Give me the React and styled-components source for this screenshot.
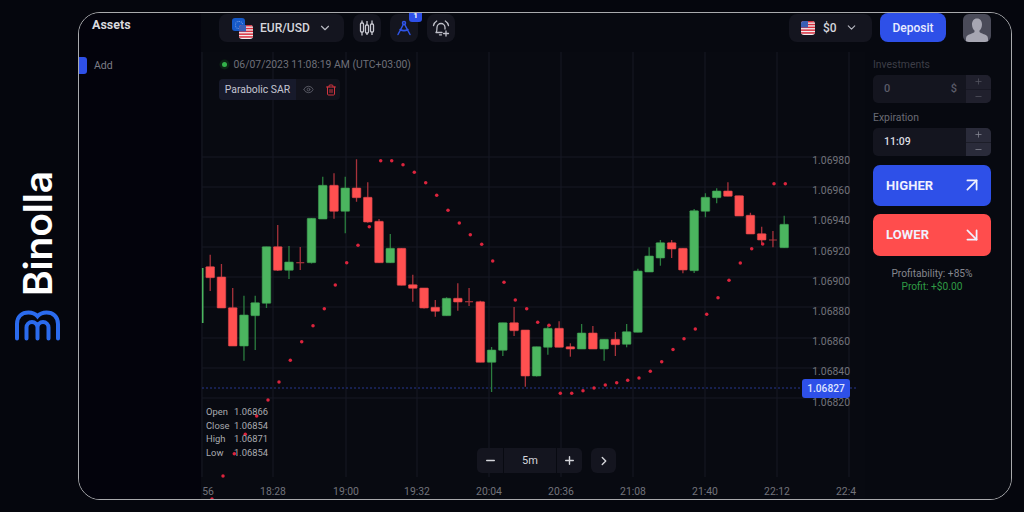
import React from "react";
import styled, { createGlobalStyle } from "styled-components";
import { ChevronDown, ChevronRight, Eye, Trash2, Plus, Minus, ArrowUpRight, ArrowDownRight } from "lucide-react";

const Global = createGlobalStyle`
  html, body { margin: 0; padding: 0; background: #05060d; }
  body { font-family: Roboto, "Liberation Sans", sans-serif; }
  * { box-sizing: border-box; }
`;

const Page = styled.div`
  width: 1024px; height: 512px; display: flex; overflow: hidden; background: #05060d;
  padding: 12px 12px 12px 0;
`;
const LogoRail = styled.div`
  width: 78px; flex: none; display: flex; flex-direction: column; align-items: center; justify-content: flex-start;
  padding: 159px 3px 0 0; gap: 14px;
`;
const LogoWord = styled.div`
  writing-mode: vertical-rl; transform: rotate(180deg); font-family: Inter, sans-serif; font-weight: 600;
  font-size: 39px; line-height: 40px; color: #fff; letter-spacing: -0.2px;
`;
const Frame = styled.div`
  flex: 1; display: flex; border: 1.5px solid #a9aaad; border-radius: 22px; overflow: hidden; background: #080a11;
`;
const Sidebar = styled.aside`
  width: 122px; flex: none; background: #03030c; display: flex; flex-direction: column; padding-top: 4px;
`;
const SideTitle = styled.div`
  font-size: 12.5px; font-weight: 700; color: #d9d9de; padding-left: 13px; line-height: 16px;
`;
const SideItem = styled.div`
  display: flex; align-items: center; gap: 7px; margin-top: 24px; font-size: 10.5px; color: #7c7d87;
`;
const SideMark = styled.span`
  width: 8px; height: 17px; background: #2e50e8; border-radius: 0 3px 3px 0;
`;
const Main = styled.div`
  flex: 1; display: flex; flex-direction: column; min-width: 0;
`;
const Header = styled.header`
  height: 39px; flex: none; display: flex; align-items: flex-start; padding: 0.5px 20px 0 18px; gap: 9px; background: #070910;
`;
const Pill = styled.div`
  height: 28px; background: #14151f; border-radius: 8px; display: flex; align-items: center; color: #d5d6dc;
  font-size: 12px; font-weight: 500; width: ${p => p.$w}px; padding-left: ${p => p.$pl}px; gap: ${p => p.$gap}px;
  svg { flex: none; }
`;
const FlagPair = styled.span`
  position: relative; width: 20px; height: 21px; display: block; margin-top: 1px;
`;
const BlueSquare = styled.span`
  position: absolute; left: 0; top: 0; width: 13px; height: 13px; border-radius: 3px; background: #1559c8;
  &::after {
    content: ""; position: absolute; left: 3px; top: 3px; width: 6px; height: 6px; border-radius: 50%;
    border: 1px dotted #7fa4e6;
  }
`;
const FlagOver = styled.span`
  position: absolute; left: 7px; top: 7px; display: block; line-height: 0;
`;
const IconBtn = styled.div`
  position: relative; width: 28px; height: 28px; background: #14151f; border-radius: 8px;
  display: flex; align-items: center; justify-content: center;
`;
const Badge = styled.span`
  position: absolute; top: -3px; right: -4px; width: 13px; height: 11px; background: #2e50e8; border-radius: 0 0 3px 3px;
  color: #fff; font-size: 8px; font-weight: 700; line-height: 10px; text-align: center;
`;
const Spacer = styled.div` flex: 1; `;
const Deposit = styled.div`
  width: 66px; height: 29px; margin: -0.5px 8px 0 -1px; background: #2e50e8; border-radius: 8px; color: #e9ecff; font-size: 12px; font-weight: 500;
  display: flex; align-items: center; justify-content: center;
`;
const Avatar = styled.div`
  width: 28px; height: 28px; background: #4a4b59; border-radius: 6px; overflow: hidden; line-height: 0;
`;
const Workspace = styled.div`
  flex: 1; display: flex; min-height: 0;
`;
const ChartArea = styled.div`
  position: relative; width: 664px; flex: none; overflow: hidden;
`;
const ChartSvg = styled.svg`
  display: block; width: 664px; height: 447px;
`;
const Stamp = styled.div`
  position: absolute; left: 20.5px; top: 5.5px; display: flex; align-items: center; gap: 7px; font-size: 10.4px; color: #6f7079; line-height: 13px;
`;
const LiveDot = styled.span`
  width: 5px; height: 5px; border-radius: 50%; background: #33b24a; box-shadow: 0 0 0 2.5px #0d2415;
`;
const Chip = styled.div`
  position: absolute; left: 18px; top: 27px; height: 21px; width: 121px; display: flex; border-radius: 4px; overflow: hidden; background: #12131c;
`;
const ChipName = styled.div`
  width: 77px; background: #171a2b; color: #c5c6d2; font-size: 10.4px; display: flex; align-items: center; justify-content: center;
`;
const ChipTools = styled.div`
  flex: 1; display: flex; align-items: center; gap: 11px; padding-left: 6.5px;
`;
const Ohlc = styled.div`
  position: absolute; left: 5px; top: 353px; display: grid; grid-template-columns: 28px auto; column-gap: 0;
  font-size: 9.4px; line-height: 13.6px; color: #a9aab0;
`;
const Zoom = styled.div`
  position: absolute; left: 276px; top: 396px; display: flex; gap: 1px; height: 25px;
`;
const ZoomBtn = styled.div`
  width: ${p => p.$w}px; background: #14151f; color: #d4d5da; display: flex; align-items: center; justify-content: center; font-size: 11px;
  border-radius: ${p => p.$r || 0}; margin-left: ${p => p.$ml || 0}px;
`;
const PriceTag = styled.div`
  position: absolute; left: 601px; top: 327px; width: 48px; height: 19px; background: #2e50e8; border-radius: 3px; color: #dfe4ff;
  font-size: 10.2px; font-weight: 500; display: flex; align-items: center; justify-content: center;
`;
const Panel = styled.aside`
  flex: 1; display: flex; flex-direction: column; padding: 5.5px 20px 0 8px; background: #070910;
`;
const FieldLabel = styled.div`
  font-size: 10.4px; line-height: 13px; color: ${p => p.$dim ? "#3d3e47" : "#6a6b74"}; margin-bottom: 4px; margin-top: ${p => p.$mt || 0}px;
`;
const Field = styled.div`
  height: 28px; display: flex; background: #14151f; border-radius: 5px; overflow: hidden;
`;
const FieldValue = styled.div`
  flex: 1; display: flex; align-items: center; justify-content: space-between; padding: 0 9px 0 ${p => p.$pl}px; font-size: ${p => p.$fs}px; font-weight: 500;
  color: ${p => p.$c};
`;
const Stepper = styled.div`
  width: 25px; flex: none; display: grid; grid-template-rows: 1fr 1fr; background: #2a2b3a; opacity: ${p => p.$dim ? 0.55 : 1};
  color: #8a8b97;
  & > span { display: flex; align-items: center; justify-content: center; }
  & > span + span { border-top: 1px solid #1c1d28; }
`;
const TradeBtn = styled.div`
  height: ${p => p.$h}px; margin-top: ${p => p.$mt}px; background: ${p => p.$bg}; border-radius: 7px; color: #f0f1ff; font-size: 13px; font-weight: 700;
  display: flex; align-items: center; justify-content: space-between; padding: 0 8.5px 0 13px; letter-spacing: 0.1px;
`;
const Profit = styled.div`
  margin-top: 11px; text-align: center; font-size: 10.2px; line-height: 13px; color: #85868e;
`;
const ProfitGreen = styled.div` color: #2f9a45; `;

const G = "#4bb55f", R = "#ff5050";
// c, bodyTop, bodyBottom, wickTop, wickBottom
const candles = [
  [G,268,323,268,323],
  [R,266.7,277.7,254.7,291],[R,277,308,264,308],[R,307.7,346,288,346],[G,315,346,295.7,360.7],[G,302.7,315.7,295.7,350],
  [G,246.7,303.3,246.7,308],[R,246.7,270.3,225,271],[G,262,270.3,246,279],[R,262.2,263.2,247,270],[G,218.3,262.7,218,263.5],
  [G,185.3,219,176.7,219],[R,185.3,211.3,173.3,218.7],[G,188,211.3,176.7,233.3],[R,188,197.7,159.3,201.7],[R,197.3,222,182.3,222.7],
  [R,221.3,262.7,219,262.7],[G,248.3,262.7,234,263],[R,248.3,285.3,248.3,285.3],[R,284.7,288.3,274.7,301.7],[R,288,308,288,308.6],
  [R,307.3,311.3,300,316.7],[G,298.3,315.7,297.3,315.7],[R,298.3,302,283.3,310.7],[R,301.2,302.2,288,306],[R,301.7,362.3,300.7,362.3],
  [G,350,362.3,347,392],[G,322.7,350.3,322.7,356],[R,322.7,330.7,307,336],[R,330,376,330,386.7],[G,346.7,376,346.7,376.5],
  [G,328.3,347.3,325,354.7],[R,328.3,347.3,321.3,347.3],[R,346.7,349,343.3,356.7],[G,333,349,324,349],[R,333,349,326,349],
  [G,339.3,349,339.3,360.7],[R,339.3,344.7,332,356],[G,331.7,344.3,324,347.3],[G,271,332.3,268.7,332.3],[G,256,272,247.3,272],
  [G,242.7,258,240,265.7],[R,242.7,249,240,258],[R,248.3,270,248.3,273.3],[G,210.7,270.7,209,273],[G,197.3,211.3,193.3,217.3],
  [G,191,197.7,188.3,203.3],[R,191,196.3,182.3,196.3],[R,195.7,216,195.7,216],[R,215.3,234,212.7,234],[R,233.7,240,226.7,245],
  [R,239.5,240.5,231,247.3],[G,224.3,247.7,215.7,247.7],
];
const dots = [[212,499],[223,476],[234.3,453.7],[245.3,434.3],[256.7,416],[268,400],[279,382],[290.3,360.3],[301.7,341.7],[313,325.7],[324.3,308.7],[335.3,285],[346.7,262.7],[358,245.3],[369.3,226.7],[380.7,160.7],[391.7,160.7],[403,164.7],[414.3,172.3],[425.7,182.7],[436.7,195.3],[448,210.3],[459.3,223],[470.3,234.7],[481.7,244.3],[492.7,261],[504,282.3],[515.3,300],[526.7,308.7],[537.7,322.3],[549,325.3],[560.3,393.3],[571.7,393.3],[583,390.7],[594,388],[605.3,385],[616.7,382.7],[627.7,380.3],[639,378],[650.3,371.3],[661.7,361.7],[673,349.5],[684,338.7],[695.3,329],[706.7,314.3],[718,297.7],[729,280.3],[740.3,263],[751.7,248.7],[762.7,244],[774,183.7],[785.3,183.7]];
const vLines = [202, 273, 346, 417, 489, 561, 633, 705, 777, 849];
const hLines = [157, 187, 217, 247, 277, 307, 338, 368, 398];
const prices = [["1.06980",160],["1.06960",190],["1.06940",220],["1.06920",251],["1.06900",281],["1.06880",311],["1.06860",341],["1.06840",371],["1.06820",402]];
const times = [["56",208],["18:28",273],["19:00",346],["19:32",417],["20:04",489],["20:36",561],["21:08",633],["21:40",705],["22:12",777],["22:4",846]];

const Chart = () => (
  <ChartSvg viewBox="201 52 664 447">
    {vLines.map(x => <line key={x} x1={x} x2={x} y1={52} y2={477} stroke="#161824" strokeWidth="1" />)}
    {hLines.map(y => <line key={y} x1={202} x2={850} y1={y} y2={y} stroke="#161824" strokeWidth="1" />)}
    <line x1={202} x2={856} y1={388} y2={388} stroke="#27368f" strokeWidth="1" strokeDasharray="2 2" />
    {candles.map(([c, t, b, wt, wb], i) => {
      const x = i === 0 ? 202.7 : 210.2 + (i - 1) * 11.255;
      const wick = c === G ? "#2b7d3f" : "#a8323b";
      const h = b - t;
      if (i === 0) return <rect key={i} x={x - 0.8} y={t} width={1.6} height={b - t} fill={G} />;
      return (
        <g key={i}>
          <line x1={x} x2={x} y1={wt} y2={wb} stroke={wick} strokeWidth="1.3" />
          {h <= 1.2
            ? <line x1={x - 4} x2={x + 4} y1={t + 0.5} y2={t + 0.5} stroke={wick} strokeWidth="1.2" />
            : <rect x={x - 4.3} y={t} width={8.6} height={h} rx="0.6" fill={c} stroke={c === G ? "#3c9a50" : "#d8454b"} strokeWidth="0.6" />}
        </g>
      );
    })}
    {dots.map(([x, y], i) => <circle key={i} cx={x} cy={y} r="1.75" fill="#dc243d" />)}
    {prices.map(([p, y]) => <text key={p} x={850} y={y + 3.5} textAnchor="end" fontSize="10.4" fill="#72737b" fontFamily="Roboto, sans-serif">{p}</text>)}
    {times.map(([t, x]) => <text key={t} x={x} y={495} textAnchor="middle" fontSize="10.4" fill="#72737b" fontFamily="Roboto, sans-serif">{t}</text>)}
  </ChartSvg>
);

const USFlag = ({ s = 14 }) => (
  <svg width={s} height={s} viewBox="0 0 14 14">
    <defs><clipPath id={`c${s}`}><rect width="14" height="14" rx="3" /></clipPath></defs>
    <g clipPath={`url(#c${s})`}>
      <rect width="14" height="14" fill="#f1eef0" />
      {[0, 2.8, 5.6, 8.4, 11.2].map(y => <rect key={y} y={y} width="14" height="1.5" fill="#d8303f" />)}
      <rect width="7" height="6.5" fill="#3a5fb4" />
    </g>
  </svg>
);
const CandleIcon = () => (
  <svg width="18" height="18" viewBox="0 0 18 18" fill="none" stroke="#c9cad2" strokeWidth="1.3">
    <path d="M4 1.5V4M4 13v3.5M9 2v4M9 14v2M14 1.5V5M14 13v3" />
    <rect x="2.5" y="4" width="3" height="9" rx="1" /><rect x="7.5" y="6" width="3" height="8" rx="1" /><rect x="12.5" y="5" width="3" height="8" rx="1" />
  </svg>
);
const CompassIcon = () => (
  <svg width="18" height="18" viewBox="0 0 18 18" fill="none" stroke="#2f55e8" strokeWidth="1.5" strokeLinecap="round">
    <circle cx="9" cy="4" r="1.5" /><path d="M8.3 5.5 3 15.5M9.7 5.5 15 15.5M5 10.5c2.5 1.4 5.5 1.4 8 0" />
  </svg>
);
const AlarmIcon = () => (
  <svg width="20" height="20" viewBox="0 0 20 20" fill="none" stroke="#bfc0c9" strokeWidth="1.3" strokeLinecap="round">
    <path d="M5 14.5c1-1 1-2 1-5a4 4 0 0 1 8 0v1.5M5 14.5h6M8.5 16.8h2" />
    <path d="M2.5 7.5C3 5.500 4 4 5.700 3M17.500 7.500C17 5.500 16 4 14.300 3M15 13v5M12.500 15.500h5" />
  </svg>
);
const AvatarIcon = () => (
  <svg width="28" height="28" viewBox="0 0 28 28">
    <path fill="#a6a6b2" d="M14 4.500c3.400 0 5 2.700 5 6 0 2.600-1 4.800-2.500 6v1.300c0 1 4 2.200 6.300 3.200 1.600.7 2.200 2 2.200 4V28H3v-3c0-2 .6-3.300 2.200-4 2.300-1 6.300-2.200 6.300-3.200v-1.300C10 15.300 9 13.100 9 10.500c0-3.300 1.600-6 5-6z" />
  </svg>
);
const BrandMark = () => (
  <svg width="47" height="31" viewBox="0 0 47 31" fill="none" stroke="#2b6bee" strokeWidth="4" strokeLinecap="round">
    <path d="M3 28.500V14C3 6.500 8 2.500 14.500 2.500c3.800 0 6.800 1.200 9 3.800 2.200-2.600 5.200-3.800 9-3.800C39 2.500 44 6.500 44 14v14.500" />
    <path d="M12.500 28.500V17.500a5.500 5.500 0 0 1 11 0v11M23.500 17.500a5.500 5.500 0 0 1 11 0v11" />
  </svg>
);

export default function App() {
  return (
    <Page>
      <Global />
      <LogoRail>
        <LogoWord>Binolla</LogoWord>
        <BrandMark />
      </LogoRail>
      <Frame>
        <Sidebar>
          <SideTitle>Assets</SideTitle>
          <SideItem><SideMark />Add</SideItem>
        </Sidebar>
        <Main>
          <Header>
            <Pill $w={125} $pl={13} $gap={8}>
              <FlagPair><BlueSquare /><FlagOver><USFlag /></FlagOver></FlagPair>
              EUR/USD
              <ChevronDown size={14} color="#b8b9c2" />
            </Pill>
            <IconBtn><CandleIcon /></IconBtn>
            <IconBtn><CompassIcon /><Badge>1</Badge></IconBtn>
            <IconBtn><AlarmIcon /></IconBtn>
            <Spacer />
            <Pill $w={83} $pl={12} $gap={8}>
              <USFlag />
              $0
              <ChevronDown size={13} color="#b8b9c2" />
            </Pill>
            <Deposit>Deposit</Deposit>
            <Avatar><AvatarIcon /></Avatar>
          </Header>
          <Workspace>
            <ChartArea>
              <Chart />
              <Stamp><LiveDot />06/07/2023 11:08:19 AM (UTC+03:00)</Stamp>
              <Chip>
                <ChipName>Parabolic SAR</ChipName>
                <ChipTools><Eye size={11} color="#5c5d68" /><Trash2 size={12} color="#d1353f" /></ChipTools>
              </Chip>
              <Ohlc>
                <span>Open</span><span>1.06866</span>
                <span>Close</span><span>1.06854</span>
                <span>High</span><span>1.06871</span>
                <span>Low</span><span>1.06854</span>
              </Ohlc>
              <Zoom>
                <ZoomBtn $w={26} $r="5px 0 0 5px"><Minus size={13} strokeWidth={2.6} /></ZoomBtn>
                <ZoomBtn $w={52}>5m</ZoomBtn>
                <ZoomBtn $w={25} $r="0 5px 5px 0"><Plus size={13} strokeWidth={2.6} /></ZoomBtn>
                <ZoomBtn $w={25} $r="6px" $ml={8}><ChevronRight size={14} strokeWidth={2.4} /></ZoomBtn>
              </Zoom>
              <PriceTag>1.06827</PriceTag>
            </ChartArea>
            <Panel>
              <FieldLabel $dim>Investments</FieldLabel>
              <Field>
                <FieldValue $pl={11} $fs={11} $c="#5b5c68">0<span>$</span></FieldValue>
                <Stepper $dim><span><Plus size={9} /></span><span><Minus size={9} /></span></Stepper>
              </Field>
              <FieldLabel $mt={8}>Expiration</FieldLabel>
              <Field>
                <FieldValue $pl={11} $fs={10.5} $c="#dcdde2">11:09</FieldValue>
                <Stepper><span><Plus size={9} /></span><span><Minus size={9} /></span></Stepper>
              </Field>
              <TradeBtn $h={41} $mt={9} $bg="#2e50e8">HIGHER<ArrowUpRight size={22} strokeWidth={1.9} /></TradeBtn>
              <TradeBtn $h={42} $mt={8} $bg="#ff4d4d">LOWER<ArrowDownRight size={22} strokeWidth={1.9} /></TradeBtn>
              <Profit>
                Profitability: +85%
                <ProfitGreen>Profit: +$0.00</ProfitGreen>
              </Profit>
            </Panel>
          </Workspace>
        </Main>
      </Frame>
    </Page>
  );
}
